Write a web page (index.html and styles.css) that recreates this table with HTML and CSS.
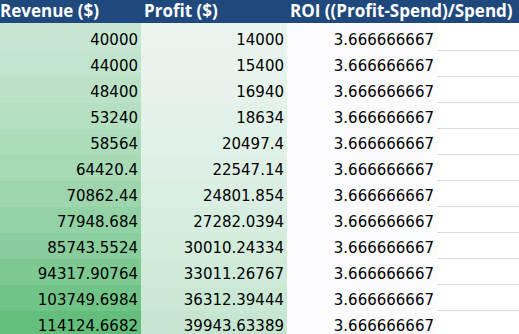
FILE: index.html
```html
<!DOCTYPE html>
<html lang="en">
<head>
<meta charset="utf-8">
<title>ROI sheet</title>
<link rel="stylesheet" href="styles.css">
</head>
<body>
<div class="sheet">
  <div class="hd">Revenue ($)</div>
  <div class="hd">Profit ($)</div>
  <div class="hd wide">ROI ((Profit-Spend)/Spend)</div>

  <div class="c" style="background:rgb(198,230,209)">40000</div>
  <div class="c" style="background:rgb(233,244,239)">14000</div>
  <div class="c roi">3.666666667</div>
  <div class="e"></div>

  <div class="c" style="background:rgb(193,228,204)">44000</div>
  <div class="c" style="background:rgb(231,244,237)">15400</div>
  <div class="c roi">3.666666667</div>
  <div class="e"></div>

  <div class="c" style="background:rgb(187,226,199)">48400</div>
  <div class="c" style="background:rgb(229,243,235)">16940</div>
  <div class="c roi">3.666666667</div>
  <div class="e"></div>

  <div class="c" style="background:rgb(181,223,193)">53240</div>
  <div class="c" style="background:rgb(227,242,233)">18634</div>
  <div class="c roi">3.666666667</div>
  <div class="e"></div>

  <div class="c" style="background:rgb(173,220,187)">58564</div>
  <div class="c" style="background:rgb(224,241,231)">20497.4</div>
  <div class="c roi">3.666666667</div>
  <div class="e"></div>

  <div class="c" style="background:rgb(166,217,180)">64420.4</div>
  <div class="c" style="background:rgb(222,240,229)">22547.14</div>
  <div class="c roi">3.666666667</div>
  <div class="e"></div>

  <div class="c" style="background:rgb(157,213,173)">70862.44</div>
  <div class="c" style="background:rgb(219,238,226)">24801.854</div>
  <div class="c roi">3.666666667</div>
  <div class="e"></div>

  <div class="c" style="background:rgb(147,210,165)">77948.684</div>
  <div class="c" style="background:rgb(215,237,223)">27282.0394</div>
  <div class="c roi">3.666666667</div>
  <div class="e"></div>

  <div class="c" style="background:rgb(137,205,156)">85743.5524</div>
  <div class="c" style="background:rgb(212,236,220)">30010.24334</div>
  <div class="c roi">3.666666667</div>
  <div class="e"></div>

  <div class="c" style="background:rgb(126,201,146)">94317.90764</div>
  <div class="c" style="background:rgb(208,234,217)">33011.26767</div>
  <div class="c roi">3.666666667</div>
  <div class="e"></div>

  <div class="c" style="background:rgb(113,196,135)">103749.6984</div>
  <div class="c" style="background:rgb(203,232,213)">36312.39444</div>
  <div class="c roi">3.666666667</div>
  <div class="e"></div>

  <div class="c" style="background:rgb(99,190,123)">114124.6682</div>
  <div class="c" style="background:rgb(198,230,209)">39943.63389</div>
  <div class="c roi">3.666666667</div>
  <div class="e"></div>
</div>
</body>
</html>
```
FILE: styles.css
```css
html, body {
  margin: 0;
  padding: 0;
  background: #ffffff;
  overflow: hidden;
}

.sheet {
  display: grid;
  grid-template-columns: 144px 146px 150px 82px;
  grid-template-rows: 23px 28px;
  grid-auto-rows: 26px;
  margin-left: -3px;
  width: 522px;
}

.hd {
  box-sizing: border-box;
  background: #1f497d;
  color: #ffffff;
  font-family: "Open Sans", "DejaVu Sans", sans-serif;
  font-weight: 700;
  font-size: 17px;
  line-height: 21px;
  padding-left: 3px;
  white-space: nowrap;
}

.wide {
  grid-column: span 2;
}

.c {
  box-sizing: border-box;
  display: flex;
  align-items: flex-end;
  justify-content: flex-end;
  padding: 0 3px 4px 0;
  font-family: "DejaVu Sans", sans-serif;
  font-size: 15px;
  line-height: 14px;
  color: #000000;
  white-space: nowrap;
}

.roi {
  background: #fcfcff;
}

.e {
  box-sizing: border-box;
  border-bottom: 1px solid #dadada;
}
```
